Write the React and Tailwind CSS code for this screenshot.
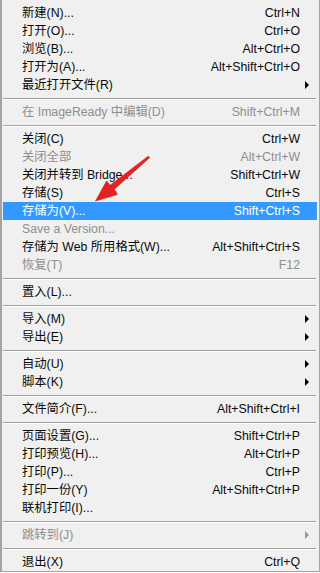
import React from "react";

// 文件菜单项: null 表示分隔线
const menu = [
    { label: "新建(N)...", shortcut: "Ctrl+N" },
    { label: "打开(O)...", shortcut: "Ctrl+O" },
    { label: "浏览(B)...", shortcut: "Alt+Ctrl+O" },
    { label: "打开为(A)...", shortcut: "Alt+Shift+Ctrl+O" },
    { label: "最近打开文件(R)", sub: true },
    null,
    { label: "在 ImageReady 中编辑(D)", shortcut: "Shift+Ctrl+M", disabled: true },
    null,
    { label: "关闭(C)", shortcut: "Ctrl+W" },
    { label: "关闭全部", shortcut: "Alt+Ctrl+W", disabled: true },
    { label: "关闭并转到 Bridge...", shortcut: "Shift+Ctrl+W" },
    { label: "存储(S)", shortcut: "Ctrl+S" },
    { label: "存储为(V)...", shortcut: "Shift+Ctrl+S", active: true },
    { label: "Save a Version...", disabled: true },
    { label: "存储为 Web 所用格式(W)...", shortcut: "Alt+Shift+Ctrl+S" },
    { label: "恢复(T)", shortcut: "F12", disabled: true },
    null,
    { label: "置入(L)..." },
    null,
    { label: "导入(M)", sub: true },
    { label: "导出(E)", sub: true },
    null,
    { label: "自动(U)", sub: true },
    { label: "脚本(K)", sub: true },
    null,
    { label: "文件简介(F)...", shortcut: "Alt+Shift+Ctrl+I" },
    null,
    { label: "页面设置(G)...", shortcut: "Shift+Ctrl+P" },
    { label: "打印预览(H)...", shortcut: "Alt+Ctrl+P" },
    { label: "打印(P)...", shortcut: "Ctrl+P" },
    { label: "打印一份(Y)", shortcut: "Alt+Shift+Ctrl+P" },
    { label: "联机打印(I)..." },
    null,
    { label: "跳转到(J)", sub: true, disabled: true },
    null,
    { label: "退出(X)", shortcut: "Ctrl+Q" },
];

function Separator() {
    return (
        <div className="mt-[4px] mb-[3px] mr-[1px]">
            <div className="h-px bg-[#a0a0a0]" />
            <div className="h-px bg-white" />
        </div>
    );
}

function MenuItem({ item }) {
    const color = item.active
        ? "bg-[#3399ff] text-white"
        : item.disabled
        ? "text-[#8e8e8e]"
        : "text-[#0a0a0a]";
    return (
        <div className={`flex items-center h-[18px] pl-[19px] ${color}`}>
            <span className="flex-1 whitespace-nowrap">{item.label}</span>
            {item.shortcut && <span className="whitespace-nowrap">{item.shortcut}</span>}
            <div className="w-[17px] h-full flex items-center pl-[5px]">
                {item.sub && (
                    <div
                        className={`w-0 h-0 border-y-[4px] border-y-transparent border-l-[4px] ${
                            item.disabled ? "border-l-[#9a9a9a]" : "border-l-black"
                        }`}
                    />
                )}
            </div>
        </div>
    );
}

export default function App() {
    return (
        <div
            className="relative w-[320px] h-[572px] bg-[#f0f0f0] border-l-2 border-r border-b border-[#a3a3a3] pt-[4px] pl-[1px] pr-[2px] text-[12.3px] leading-none overflow-hidden"
            style={{ fontFamily: '"Liberation Sans", "Noto Sans CJK SC", sans-serif' }}
        >
            {menu.map((item, i) => (item ? <MenuItem key={i} item={item} /> : <Separator key={i} />))}

            {/* 红色指示箭头 */}
            <svg className="absolute left-0 top-0 pointer-events-none" width="320" height="572">
                <polygon
                    points="147.8,157.6 112.4,189.2 115.5,194.5 93.5,201 104.6,181 108.2,185.2 146.2,156.2"
                    fill="#e42222"
                    stroke="#d01818"
                    strokeWidth="0.6"
                    strokeLinejoin="round"
                />
            </svg>
        </div>
    );
}
